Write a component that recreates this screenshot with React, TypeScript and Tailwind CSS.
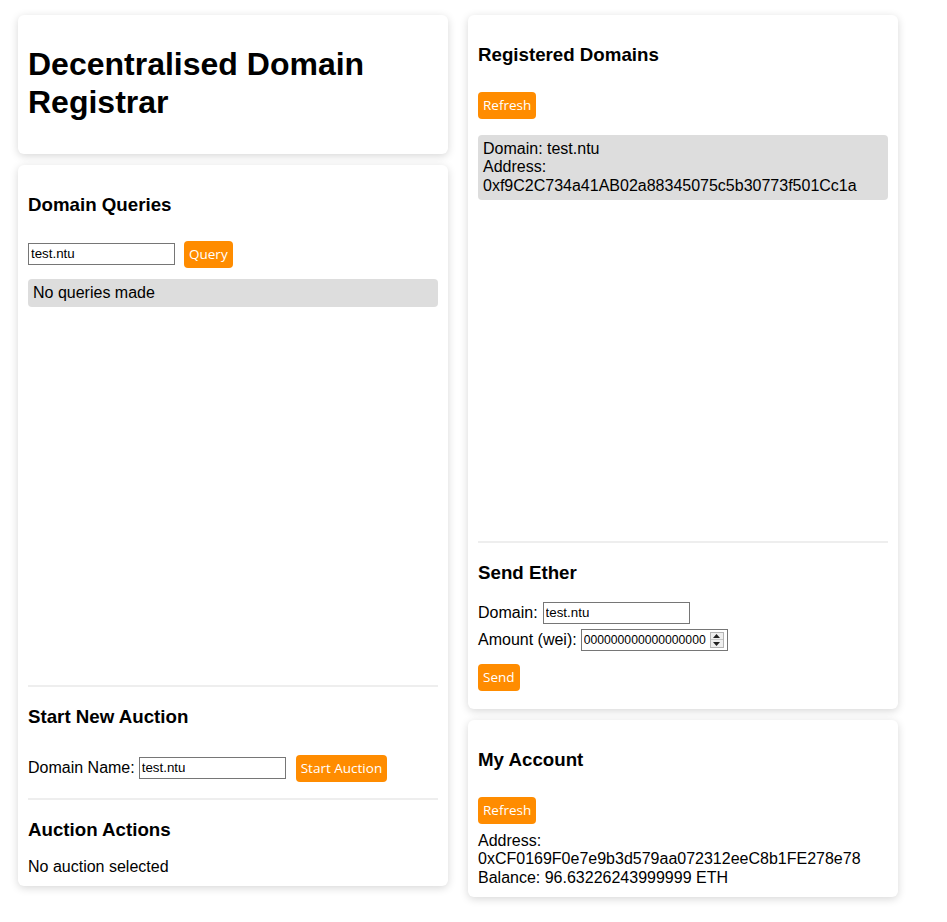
import React from "react";

const FONT = { fontFamily: '"Liberation Sans", Arial, sans-serif' };

function Btn({ children, className = "" }: { children: React.ReactNode; className?: string }) {
  return (
    <button
      className={`h-[27px] shrink-0 px-[5px] rounded-[4px] bg-[#ff8c00] text-white text-[13.5px] leading-[27px] font-['Open_Sans',sans-serif] ${className}`}
    >
      {children}
    </button>
  );
}

function TextInput({ value, className = "" }: { value: string; className?: string }) {
  return (
    <div
      className={`h-[22px] w-[147px] shrink-0 border border-[#767676] bg-white px-[2px] flex items-center text-[13.33px] leading-[16px] text-black font-['Liberation_Sans',Arial,sans-serif] ${className}`}
    >
      <span className="whitespace-nowrap overflow-hidden">{value}</span>
    </div>
  );
}

function NumberInput({ value, className = "" }: { value: string; className?: string }) {
  return (
    <div
      className={`h-[22px] w-[147px] shrink-0 border border-[#767676] bg-white pl-[2px] pr-[3px] flex items-center text-[12.2px] leading-[16px] text-black font-['Liberation_Sans',Arial,sans-serif] ${className}`}
    >
      <span className="flex-1 whitespace-nowrap overflow-hidden">{value}</span>
      <div className="w-[14px] h-[16px] ml-[1px] flex flex-col border border-[#b5b5b5] bg-[#efefef]">
        <div className="flex-1 flex items-center justify-center border-b border-[#c8c8c8]">
          <svg width="7" height="4" viewBox="0 0 7 4">
            <polygon points="3.5,0 7,4 0,4" fill="#222" />
          </svg>
        </div>
        <div className="flex-1 flex items-center justify-center">
          <svg width="7" height="4" viewBox="0 0 7 4">
            <polygon points="0,0 7,0 3.5,4" fill="#222" />
          </svg>
        </div>
      </div>
    </div>
  );
}

function Card({ children, className = "" }: { children: React.ReactNode; className?: string }) {
  return (
    <div
      className={`w-[430px] flex flex-col bg-white rounded-[6px] shadow-[0_2px_8px_rgba(0,0,0,0.16)] px-[10px] pt-[10px] pb-[10px] ${className}`}
    >
      {children}
    </div>
  );
}

function H3({ children }: { children: React.ReactNode }) {
  return (
    <h3 className="text-[18.72px] leading-[21.5px] font-bold mt-[18.72px] mb-[18.72px] text-black">{children}</h3>
  );
}

function Hr({ className = "" }: { className?: string }) {
  return <div className={`h-[2px] shrink-0 bg-[#eeeeee] ${className}`} />;
}

export default function App() {
  return (
    <div className="min-h-[922px] bg-white text-black text-[16px] leading-[18.4px]" style={FONT}>
      <div className="flex items-start gap-[20px] pl-[18px] pt-[15px]">
        {/* Left column */}
        <div className="flex flex-col gap-[11px]">
          <Card>
            <h1 className="text-[32px] leading-[38px] font-bold mt-[19.5px] mb-[23.5px]">
              Decentralised Domain Registrar
            </h1>
          </Card>
          <Card>
            <H3>Domain Queries</H3>
            <div className="mt-[7px] h-[27px] flex items-center">
              <TextInput value="test.ntu" />
              <Btn className="ml-[9px]">Query</Btn>
            </div>
            <div className="mt-[11px] h-[400px]">
              <div className="bg-[#dddddd] rounded-[4px] px-[5px] py-[5px]">No queries made</div>
            </div>
            <Hr className="mt-[6px]" />
            <H3>Start New Auction</H3>
            <div className="mt-[9px] h-[27px] flex items-center">
              <span>Domain Name:</span>
              <TextInput value="test.ntu" className="ml-[4px]" />
              <Btn className="ml-[10px]">Start Auction</Btn>
            </div>
            <Hr className="mt-[16px]" />
            <H3>Auction Actions</H3>
            <div className="-mt-[1px]">No auction selected</div>
          </Card>
        </div>

        {/* Right column */}
        <div className="flex flex-col gap-[11px]">
          <Card>
            <H3>Registered Domains</H3>
            <div className="mt-[8px] flex">
              <Btn>Refresh</Btn>
            </div>
            <div className="mt-[16px] h-[400px]">
              <div className="bg-[#dddddd] rounded-[4px] px-[5px] py-[5px]">
                <div>Domain: test.ntu</div>
                <div>Address:</div>
                <div>0xf9C2C734a41AB02a88345075c5b30773f501Cc1a</div>
              </div>
            </div>
            <Hr className="mt-[6px]" />
            <H3>Send Ether</H3>
            <div className="flex items-center h-[22px]">
              <span>Domain:</span>
              <TextInput value="test.ntu" className="ml-[5px]" />
            </div>
            <div className="flex items-center h-[22px] mt-[5px]">
              <span>Amount (wei):</span>
              <NumberInput value="000000000000000000" className="ml-[4px]" />
            </div>
            <div className="mt-[13px] mb-[8px] flex">
              <Btn>Send</Btn>
            </div>
          </Card>
          <Card>
            <H3>My Account</H3>
            <div className="mt-[8px] flex">
              <Btn>Refresh</Btn>
            </div>
            <div className="mt-[8px]">
              <div>Address:</div>
              <div>0xCF0169F0e7e9b3d579aa072312eeC8b1FE278e78</div>
              <div>Balance: 96.63226243999999 ETH</div>
            </div>
          </Card>
        </div>
      </div>
    </div>
  );
}
